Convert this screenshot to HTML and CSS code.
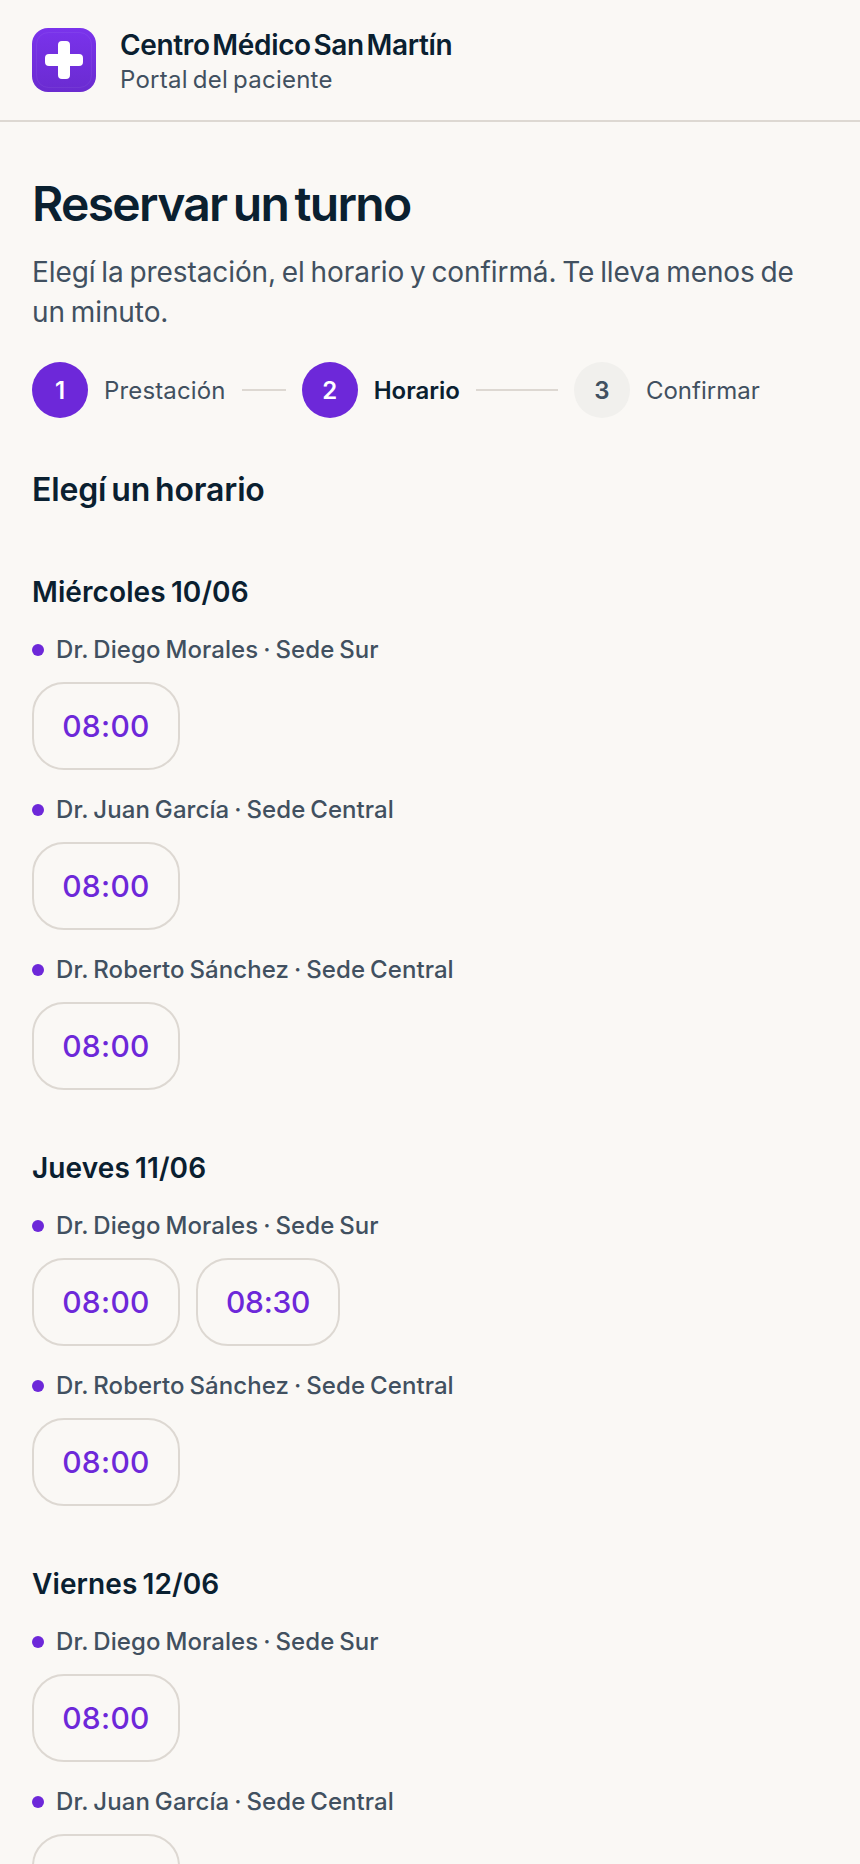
FILE: index.html
```html
<!DOCTYPE html>
<html lang="es">
<head>
  <meta charset="UTF-8">
  <meta name="viewport" content="width=device-width, initial-scale=1.0">
  <title>Centro Médico San Martín</title>
  <link rel="stylesheet" href="styles.css">
</head>
<body>
  <!-- Header -->
  <header class="header">
    <div class="logo">
      <svg viewBox="0 0 64 64" width="64" height="64">
        <defs>
          <linearGradient id="logo-bg" x1="0" y1="0" x2="0" y2="1">
            <stop offset="0" stop-color="#7a33ec"/>
            <stop offset="1" stop-color="#6a2bd0"/>
          </linearGradient>
        </defs>
        <rect width="64" height="64" rx="16" fill="url(#logo-bg)"/>
        <rect x="4.500" y="4.500" width="55" height="55" rx="12" fill="none" stroke="#fff" stroke-opacity="0.06"/>
        <path d="M26 17a4 4 0 0 1 4-4h4a4 4 0 0 1 4 4v9h9a4 4 0 0 1 4 4v4a4 4 0 0 1-4 4h-9v9a4 4 0 0 1-4 4h-4a4 4 0 0 1-4-4v-9h-9a4 4 0 0 1-4-4v-4a4 4 0 0 1 4-4h9z" fill="#fff"/>
      </svg>
    </div>
    <div class="brand">
      <div class="brand-name">Centro Médico San Martín</div>
      <div class="brand-sub">Portal del paciente</div>
    </div>
  </header>

  <main class="container">
    <h1 class="title">Reservar un turno</h1>
    <p class="intro">Elegí la prestación, el horario y confirmá. Te lleva menos de un minuto.</p>

    <!-- Steps -->
    <div class="steps">
      <div class="step-num done">1</div>
      <div class="step-label">Prestación</div>
      <div class="step-line short"></div>
      <div class="step-num done">2</div>
      <div class="step-label current">Horario</div>
      <div class="step-line"></div>
      <div class="step-num">3</div>
      <div class="step-label last">Confirmar</div>
    </div>

    <h2 class="section-title">Elegí un horario</h2>

    <!-- Miércoles -->
    <section class="day">
      <h3 class="day-title">Miércoles 10/06</h3>
      <div class="doctor">Dr. Diego Morales · Sede Sur</div>
      <div class="slots"><button class="slot">08:00</button></div>
      <div class="doctor">Dr. Juan García · Sede Central</div>
      <div class="slots"><button class="slot">08:00</button></div>
      <div class="doctor">Dr. Roberto Sánchez · Sede Central</div>
      <div class="slots"><button class="slot">08:00</button></div>
    </section>

    <!-- Jueves -->
    <section class="day">
      <h3 class="day-title">Jueves 11/06</h3>
      <div class="doctor">Dr. Diego Morales · Sede Sur</div>
      <div class="slots"><button class="slot">08:00</button><button class="slot tight">08:30</button></div>
      <div class="doctor">Dr. Roberto Sánchez · Sede Central</div>
      <div class="slots"><button class="slot">08:00</button></div>
    </section>

    <!-- Viernes -->
    <section class="day">
      <h3 class="day-title">Viernes 12/06</h3>
      <div class="doctor">Dr. Diego Morales · Sede Sur</div>
      <div class="slots"><button class="slot">08:00</button></div>
      <div class="doctor">Dr. Juan García · Sede Central</div>
      <div class="slots"><button class="slot">08:00</button></div>
    </section>
  </main>
</body>
</html>
```

FILE: styles.css
```css
html, body {
  height: 100%;
  overflow: hidden;
}

body {
  margin: 0;
  font-family: 'Inter', 'Noto Sans', sans-serif;
  background: #faf8f5;
  color: #0a2030;
}

.header {
  display: flex;
  align-items: center;
  gap: 24px;
  height: 120px;
  padding: 0 32px;
  border-bottom: 2px solid #ddd8d2;
}

.logo {
  width: 64px;
  height: 64px;
}

.brand {
  padding-top: 3px;
}

.brand-name {
  font-size: 28px;
  font-weight: 580;
  line-height: 36px;
  letter-spacing: -0.35px;
  word-spacing: -4px;
}

.brand-sub {
  margin-top: 1px;
  font-size: 24px;
  line-height: 32px;
  color: #415060;
  letter-spacing: 0.25px;
  word-spacing: -2px;
}

.container {
  padding: 0 32px;
}

.title {
  margin: 52px 0 0;
  font-size: 48px;
  font-weight: 580;
  line-height: 60px;
  letter-spacing: -1.7px;
  word-spacing: -4px;
}

.intro {
  margin: 18px 0 0;
  font-size: 28px;
  line-height: 40px;
  color: #415060;
  letter-spacing: -0.08px;
  word-spacing: -2px;
}

.steps {
  display: flex;
  align-items: center;
  margin-top: 30px;
}

.step-num {
  flex: none;
  display: flex;
  align-items: center;
  justify-content: center;
  width: 56px;
  height: 56px;
  border-radius: 50%;
  background: #f1f0ed;
  color: #415060;
  font-size: 24px;
  font-weight: 600;
}

.step-num.done {
  background: #6d28d9;
  color: #fff;
}

.step-label {
  margin: 0 16px;
  font-size: 24px;
  color: #415060;
  letter-spacing: 0.15px;
}

.step-label.current {
  color: #0a2030;
  font-weight: 600;
  letter-spacing: 0;
}

.step-label.last {
  letter-spacing: 0;
}

.step-line {
  width: 82px;
  height: 2px;
  background: #ddd8d2;
  margin-right: 16px;
}

.step-line.short {
  width: 44px;
}

.section-title {
  margin: 50px 0 0;
  padding-bottom: 2px;
  font-size: 32px;
  font-weight: 580;
  line-height: 44px;
  letter-spacing: -0.15px;
  word-spacing: -3px;
}

.day {
  margin-top: 60px;
}

.day-title {
  margin: 0;
  font-size: 28px;
  font-weight: 580;
  line-height: 36px;
  letter-spacing: 0.1px;
  word-spacing: -2px;
}

.doctor {
  display: flex;
  align-items: center;
  gap: 12px;
  margin-top: 24px;
  font-size: 24px;
  font-weight: 500;
  line-height: 32px;
  color: #415060;
  letter-spacing: 0.07px;
  word-spacing: -1.5px;
}

.doctor::before {
  content: "";
  width: 12px;
  height: 12px;
  border-radius: 50%;
  background: #6d28d9;
}

.slots {
  display: flex;
  gap: 16px;
  margin-top: 16px;
}

.slot {
  height: 88px;
  width: 148px;
  border: 2px solid #ddd8d2;
  border-radius: 32px;
  background: transparent;
  color: #6d28d9;
  font-family: inherit;
  font-size: 30px;
  font-weight: 500;
  letter-spacing: 0.3px;
}

.slot.tight {
  width: 144px;
  letter-spacing: -0.3px;
}
```
